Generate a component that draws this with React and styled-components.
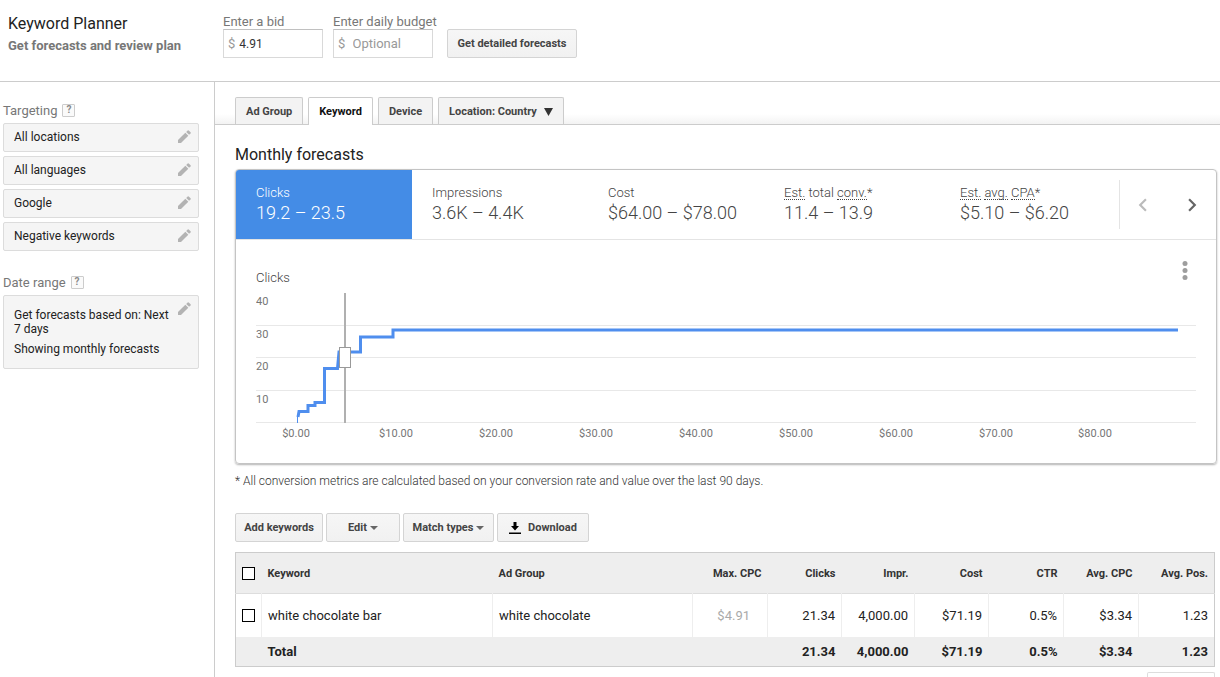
import React, { useState } from "react";
import styled, { createGlobalStyle } from "styled-components";
import { MdChevronLeft, MdChevronRight } from "react-icons/md";

const GlobalStyle = createGlobalStyle`
  * {
    box-sizing: border-box;
  }
  body {
    margin: 0;
    background: #fff;
    color: #222;
    font-family: Roboto, "Liberation Sans", sans-serif;
    font-size: 13px;
  }
  button, input {
    font-family: inherit;
  }
`;

const Page = styled.div`
  min-height: 100vh;
  display: flex;
  flex-direction: column;
`;

const Header = styled.header`
  display: flex;
  align-items: flex-start;
  height: 82px;
  padding: 14px 8px 0;
  border-bottom: 1px solid #ccc;
`;

const Heading = styled.div`
  width: 215px;
`;

const Title = styled.h1`
  margin: 0;
  font-size: 16px;
  font-weight: normal;
  line-height: 20px;
`;

const Subtitle = styled.div`
  margin-top: 4px;
  color: #777;
  font-weight: bold;
  line-height: 16px;
`;

const Field = styled.div`
  width: 100px;
  margin-right: 10px;
`;

const FieldLabel = styled.label`
  display: block;
  height: 15px;
  color: #777;
  line-height: 16px;
  white-space: nowrap;
`;

const MoneyBox = styled.div`
  display: flex;
  align-items: center;
  height: 29px;
  padding-left: 4px;
  border: 1px solid #d9d9d9;
  border-top-color: #c0c0c0;
  color: #999;
`;

const MoneyInput = styled.input`
  width: 100%;
  min-width: 0;
  border: 0;
  outline: 0;
  padding: 0 4px;
  background: transparent;
  color: #333;
  font-size: ${props => (props.$small ? "12px" : "13px")};
  &::placeholder {
    color: #999;
  }
`;

const Button = styled.button`
  display: inline-flex;
  align-items: center;
  justify-content: center;
  height: 29px;
  width: ${props => props.$width}px;
  padding: 0;
  border: 1px solid #d4d4d4;
  border-radius: 2px;
  background: linear-gradient(#f6f6f6, #f1f1f1);
  color: #444;
  font-size: 11px;
  font-weight: bold;
  white-space: nowrap;
  cursor: pointer;
`;

const HeaderButton = styled(Button)`
  margin: 15px 0 0 4px;
`;

const Body = styled.div`
  flex: 1;
  display: flex;
`;

const Sidebar = styled.aside`
  width: 215px;
  flex-shrink: 0;
  padding: 20px 15px 0 3px;
  border-right: 1px solid #ccc;
`;

const SideTitle = styled.h2`
  display: flex;
  align-items: center;
  margin: 0 0 5px;
  height: 16px;
  color: #777;
  font-size: 13px;
  font-weight: normal;
`;

const Help = styled.button`
  width: 13px;
  height: 13px;
  margin-left: 5px;
  padding: 0;
  border: 1px solid #ccc;
  border-radius: 1px;
  background: #fafafa;
  color: #888;
  font-size: 10px;
  font-weight: bold;
  line-height: 10px;
`;

const Setting = styled.button`
  display: flex;
  justify-content: space-between;
  align-items: flex-start;
  width: 100%;
  min-height: ${props => (props.$tall ? "74px" : "29px")};
  margin-bottom: ${props => (props.$last ? "23px" : "4px")};
  padding: 6px 7px 0 10px;
  border: 1px solid #dcdcdc;
  border-radius: 2px;
  background: #f5f5f5;
  color: #222;
  font-size: 12px;
  line-height: 14px;
  text-align: left;
  cursor: pointer;
`;

const PencilIcon = styled.svg`
  width: 13px;
  height: 13px;
  flex-shrink: 0;
  fill: #b3b3b3;
`;

const DateText = styled.span`
  padding-top: 6px;
`;

const DateLine = styled.span`
  display: block;
  margin-bottom: 6px;
`;

const Main = styled.main`
  flex: 1;
  min-width: 0;
`;

const TabBar = styled.div`
  display: flex;
  align-items: flex-end;
  gap: 5px;
  height: 43px;
  padding-left: 20px;
  border-bottom: 1px solid #ccc;
  background: linear-gradient(#fff 32px, #f3f3f3);
`;

const Tab = styled.button`
  display: flex;
  align-items: center;
  height: ${props => (props.$active ? "28px" : "27px")};
  margin-bottom: ${props => (props.$active ? "-1px" : "0")};
  padding: 0 10px;
  border: 1px solid #ccc;
  border-bottom: 0;
  border-radius: 2px 2px 0 0;
  background: ${props => (props.$active ? "#fff" : "#f3f3f3")};
  color: ${props => (props.$active ? "#111" : "#444")};
  font-size: 11px;
  font-weight: bold;
  cursor: pointer;
  svg {
    margin-left: 7px;
  }
`;

const Content = styled.div`
  padding: 20px 3px 0 20px;
`;

const SectionTitle = styled.h2`
  margin: 0 0 4px;
  font-size: 16px;
  font-weight: normal;
  line-height: 20px;
`;

const Card = styled.section`
  border: 1px solid #c4c4c4;
  border-radius: 4px;
  box-shadow: 0 1px 2px rgba(0, 0, 0, 0.3);
  overflow: hidden;
`;

const Metrics = styled.div`
  display: flex;
  height: 70px;
  border-bottom: 1px solid #e4e4e4;
`;

const Metric = styled.button`
  flex: 0 1 176px;
  padding: 0 0 0 20px;
  border: 0;
  background: ${props => (props.$active ? "#448ce6" : "#fff")};
  color: ${props => (props.$active ? "#fff" : "#444")};
  font-weight: 300;
  text-align: left;
  white-space: nowrap;
  cursor: pointer;
`;

const MetricName = styled.div`
  font-size: 13px;
  line-height: 16px;
`;

const Abbr = styled.span`
  border-bottom: 1px dotted #444;
  display: inline-block;
  line-height: 13px;
`;

const MetricValue = styled.div`
  margin-top: 1px;
  font-size: 18px;
  line-height: 22px;
`;

const Pager = styled.div`
  display: flex;
  align-items: center;
  justify-content: space-between;
  width: 97px;
  height: 49px;
  margin: 10px 0 0 auto;
  padding: 0 11px 0 10px;
  border-left: 1px solid #e4e4e4;
`;

const IconButton = styled.button`
  display: flex;
  padding: 0;
  border: 0;
  background: transparent;
  color: ${props => props.$color};
  cursor: pointer;
`;

const ChartArea = styled.div`
  padding: 20px 20px 18px;
`;

const ChartHead = styled.div`
  display: flex;
  justify-content: space-between;
  height: 30px;
  padding-right: 8px;
`;

const ChartTitle = styled.h3`
  margin: 0;
  padding-top: 10px;
  color: #444;
  font-size: 13px;
  font-weight: 300;
  line-height: 16px;
`;

const Chart = styled.svg`
  display: block;
  width: 100%;
  text {
    fill: #757575;
    font-size: 11px;
  }
`;

const Footnote = styled.p`
  margin: 9px 0 24px;
  color: #333;
  font-size: 12px;
  font-weight: 300;
  line-height: 16px;
`;

const Toolbar = styled.div`
  display: flex;
  gap: 3px;
  margin-bottom: 10px;
`;

const Caret = styled.span`
  margin-left: 3px;
  border: 4px solid transparent;
  border-top-color: #666;
  border-bottom: 0;
`;

const DownloadIcon = styled.svg`
  margin-right: 7px;
`;

const TableWrap = styled.div`
  margin-right: 2px;
`;

const Table = styled.table`
  width: 100%;
  table-layout: fixed;
  border-collapse: collapse;
  border: 1px solid #ccc;
`;

const HeadRow = styled.tr`
  height: 41px;
  background: #eee;
  border-bottom: 1px solid #ddd;
  font-size: 11px;
  color: #333;
`;

const Row = styled.tr`
  height: 43px;
  td + td {
    border-left: 1px solid #eee;
  }
`;

const TotalRow = styled.tr`
  height: 30px;
  background: #eee;
  font-weight: bold;
`;

const Cell = styled.td`
  padding: 0 6px;
  text-align: ${props => (props.$num ? "right" : "left")};
  color: ${props => (props.$muted ? "#aaa" : "inherit")};
  ${props => props.$muted && "padding-right: 17px;"}
`;

const Checkbox = styled.input`
  appearance: none;
  display: block;
  width: 13px;
  height: 13px;
  margin: 0;
  border: 1px solid #000;
  background: #fff;
  &:checked {
    background: #448ce6;
  }
`;

const TableFooter = styled.div`
  width: 68px;
  height: 5px;
  margin: 5px 2px 0 auto;
  border: 1px solid #ddd;
  border-bottom: 0;
  border-radius: 2px 2px 0 0;
`;

const tabs = ["Ad Group", "Keyword", "Device", "Location: Country"];
const settings = ["All locations", "All languages", "Google", "Negative keywords"];

const metrics = [
  { name: "Clicks", value: "19.2 – 23.5" },
  { name: "Impressions", value: "3.6K – 4.4K" },
  { name: "Cost", value: "$64.00 – $78.00" },
  {
    name: <><Abbr>Est.</Abbr> total <Abbr>conv.</Abbr>*</>,
    value: "11.4 – 13.9"
  },
  {
    name: <><Abbr>Est.</Abbr> <Abbr>avg.</Abbr> <Abbr>CPA</Abbr>*</>,
    value: "$5.10 – $6.20"
  }
];

const columns = [
  { label: "Max. CPC", value: "$4.91", total: "", width: 75, muted: true },
  { label: "Clicks", value: "21.34", total: "21.34", width: 74 },
  { label: "Impr.", value: "4,000.00", total: "4,000.00", width: 73 },
  { label: "Cost", value: "$71.19", total: "$71.19", width: 74 },
  { label: "CTR", value: "0.5%", total: "0.5%", width: 75 },
  { label: "Avg. CPC", value: "$3.34", total: "$3.34", width: 75 },
  { label: "Avg. Pos.", value: "1.23", total: "1.23", width: 76 }
];

function Pencil() {
  return (
    <PencilIcon viewBox="0 0 13 13" aria-hidden="true">
      <path d="M0 10 7.300 2.700 10.300 5.700 3 13H0z" />
      <path d="M8.200 1.900 9.700 .4Q10.200 0 10.700 .4L12.600 2.300Q13 2.800 12.600 3.300L11.100 4.800z" />
    </PencilIcon>
  );
}

function ClicksChart() {
  return (
    <Chart viewBox="0 0 940 155" role="img" aria-label="Clicks by bid">
      {[36, 68, 101, 133].map(y => (
        <rect key={y} x="0" y={y - 1} width="940" height="1" fill="#e8e8e8" />
      ))}
      {[40, 30, 20, 10].map((n, i) => (
        <text key={n} x="0" y={[15, 48, 80, 113][i]}>{n}</text>
      ))}
      {[0, 10, 20, 30, 40, 50, 60, 70, 80].map(n => (
        <text key={n} x={40 + n * 10 - (n === 80 ? 1 : 0)} y="147" textAnchor="middle">
          ${n}.00
        </text>
      ))}
      <path d="M41.500 133V124" stroke="#4f8eee" strokeWidth="1" fill="none" />
      <path
        d="M42 127L43 121.500H52V115.500H59V112.500H68.500V78.500H81.500L83 62H104.500V47H137V40H922"
        stroke="#4f8eee"
        strokeWidth="3"
        fill="none"
      />
      <rect x="88" y="3" width="2" height="130" fill="#b0b0b0" />
      <rect x="83.500" y="57.500" width="11" height="20" fill="#fff" stroke="#999" />
    </Chart>
  );
}

export default function App() {
  const [tab, setTab] = useState("Keyword");
  const [metric, setMetric] = useState(0);

  return (
    <Page>
      <GlobalStyle />
      <Header>
        <Heading>
          <Title>Keyword Planner</Title>
          <Subtitle>Get forecasts and review plan</Subtitle>
        </Heading>
        <Field>
          <FieldLabel htmlFor="bid">Enter a bid</FieldLabel>
          <MoneyBox>
            $<MoneyInput id="bid" $small defaultValue="4.91" />
          </MoneyBox>
        </Field>
        <Field>
          <FieldLabel htmlFor="budget">Enter daily budget</FieldLabel>
          <MoneyBox>
            $&nbsp;<MoneyInput id="budget" placeholder="Optional" />
          </MoneyBox>
        </Field>
        <HeaderButton $width={130}>Get detailed forecasts</HeaderButton>
      </Header>
      <Body>
        <Sidebar>
          <SideTitle>
            Targeting <Help aria-label="Targeting help">?</Help>
          </SideTitle>
          {settings.map((name, i) => (
            <Setting key={name} $last={i === settings.length - 1}>
              {name}
              <Pencil />
            </Setting>
          ))}
          <SideTitle>
            Date range <Help aria-label="Date range help">?</Help>
          </SideTitle>
          <Setting $tall>
            <DateText>
              <DateLine>Get forecasts based on: Next 7 days</DateLine>
              <DateLine>Showing monthly forecasts</DateLine>
            </DateText>
            <Pencil />
          </Setting>
        </Sidebar>
        <Main>
          <TabBar>
            {tabs.map(name => (
              <Tab key={name} $active={name === tab} onClick={() => setTab(name)}>
                {name}
                {name.startsWith("Location") && (
                  <svg width="9" height="9" viewBox="0 0 9 9">
                    <path d="M0 1h9L4.500 9z" fill="#333" />
                  </svg>
                )}
              </Tab>
            ))}
          </TabBar>
          <Content>
            <SectionTitle>Monthly forecasts</SectionTitle>
            <Card>
              <Metrics>
                {metrics.map((m, i) => (
                  <Metric key={i} $active={i === metric} onClick={() => setMetric(i)}>
                    <MetricName>{m.name}</MetricName>
                    <MetricValue>{m.value}</MetricValue>
                  </Metric>
                ))}
                <Pager>
                  <IconButton $color="#bbb" aria-label="Previous metrics">
                    <MdChevronLeft size={26} />
                  </IconButton>
                  <IconButton $color="#666" aria-label="Next metrics">
                    <MdChevronRight size={26} />
                  </IconButton>
                </Pager>
              </Metrics>
              <ChartArea>
                <ChartHead>
                  <ChartTitle>Clicks</ChartTitle>
                  <IconButton aria-label="Chart options">
                    <svg width="6" height="20" viewBox="0 0 6 20" fill="#9e9e9e">
                      <circle cx="3" cy="3.500" r="2.500" />
                      <circle cx="3" cy="10.500" r="2.500" />
                      <circle cx="3" cy="17.500" r="2.500" />
                    </svg>
                  </IconButton>
                </ChartHead>
                <ClicksChart />
              </ChartArea>
            </Card>
            <Footnote>
              * All conversion metrics are calculated based on your conversion rate
              and value over the last 90 days.
            </Footnote>
            <Toolbar>
              <Button $width={88}>Add keywords</Button>
              <Button $width={74}>Edit <Caret /></Button>
              <Button $width={91}>Match types <Caret /></Button>
              <Button $width={92}>
                <DownloadIcon width="12" height="12" viewBox="0 0 12 12">
                  <path d="M4.500 0h3v4H10L6 8.500 2 4h2.500zM0 10.500h12V12H0z" fill="#000" />
                </DownloadIcon>
                Download
              </Button>
            </Toolbar>
            <TableWrap>
              <Table>
                <colgroup>
                  <col width="26" />
                  <col width="231" />
                  <col width="200" />
                  {columns.map(c => (
                    <col key={c.label} width={c.width} />
                  ))}
                </colgroup>
                <thead>
                  <HeadRow>
                    <Cell as="th"><Checkbox type="checkbox" aria-label="Select all" /></Cell>
                    <Cell as="th">Keyword</Cell>
                    <Cell as="th">Ad Group</Cell>
                    {columns.map(c => (
                      <Cell as="th" key={c.label} $num>{c.label}</Cell>
                    ))}
                  </HeadRow>
                </thead>
                <tbody>
                  <Row>
                    <Cell>
                      <Checkbox type="checkbox" aria-label="Select white chocolate bar" />
                    </Cell>
                    <Cell>white chocolate bar</Cell>
                    <Cell>white chocolate</Cell>
                    {columns.map(c => (
                      <Cell key={c.label} $num $muted={c.muted}>{c.value}</Cell>
                    ))}
                  </Row>
                </tbody>
                <tfoot>
                  <TotalRow>
                    <Cell />
                    <Cell>Total</Cell>
                    <Cell />
                    {columns.map(c => (
                      <Cell key={c.label} $num>{c.total}</Cell>
                    ))}
                  </TotalRow>
                </tfoot>
              </Table>
            </TableWrap>
            <TableFooter />
          </Content>
        </Main>
      </Body>
    </Page>
  );
}
